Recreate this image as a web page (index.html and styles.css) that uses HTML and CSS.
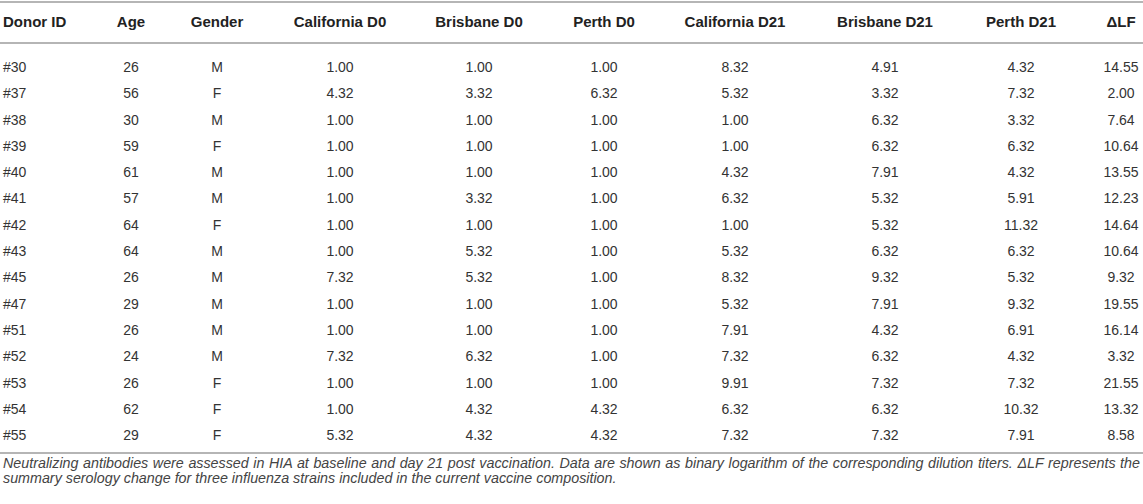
FILE: index.html
```html
<!DOCTYPE html>
<html lang="en">
<head>
    <meta charset="UTF-8">
    <title>Donor serology</title>
    <link rel="stylesheet" href="styles.css">
</head>
<body>
    <table class="titers">
        <colgroup>
            <col class="c-id"><col class="c-age"><col class="c-gender">
            <col class="c-cal0"><col class="c-bris0"><col class="c-perth0">
            <col class="c-cal21"><col class="c-bris21"><col class="c-perth21">
            <col class="c-dlf">
        </colgroup>
        <thead>
            <tr>
                <th class="left">Donor ID</th>
                <th>Age</th>
                <th>Gender</th>
                <th>California D0</th>
                <th>Brisbane D0</th>
                <th>Perth D0</th>
                <th>California D21</th>
                <th>Brisbane D21</th>
                <th>Perth D21</th>
                <th>&Delta;LF</th>
            </tr>
        </thead>
        <tbody>
            <tr><td class="left">#30</td><td>26</td><td>M</td><td>1.00</td><td>1.00</td><td>1.00</td><td>8.32</td><td>4.91</td><td>4.32</td><td>14.55</td></tr>
            <tr><td class="left">#37</td><td>56</td><td>F</td><td>4.32</td><td>3.32</td><td>6.32</td><td>5.32</td><td>3.32</td><td>7.32</td><td>2.00</td></tr>
            <tr><td class="left">#38</td><td>30</td><td>M</td><td>1.00</td><td>1.00</td><td>1.00</td><td>1.00</td><td>6.32</td><td>3.32</td><td>7.64</td></tr>
            <tr><td class="left">#39</td><td>59</td><td>F</td><td>1.00</td><td>1.00</td><td>1.00</td><td>1.00</td><td>6.32</td><td>6.32</td><td>10.64</td></tr>
            <tr><td class="left">#40</td><td>61</td><td>M</td><td>1.00</td><td>1.00</td><td>1.00</td><td>4.32</td><td>7.91</td><td>4.32</td><td>13.55</td></tr>
            <tr><td class="left">#41</td><td>57</td><td>M</td><td>1.00</td><td>3.32</td><td>1.00</td><td>6.32</td><td>5.32</td><td>5.91</td><td>12.23</td></tr>
            <tr><td class="left">#42</td><td>64</td><td>F</td><td>1.00</td><td>1.00</td><td>1.00</td><td>1.00</td><td>5.32</td><td>11.32</td><td>14.64</td></tr>
            <tr><td class="left">#43</td><td>64</td><td>M</td><td>1.00</td><td>5.32</td><td>1.00</td><td>5.32</td><td>6.32</td><td>6.32</td><td>10.64</td></tr>
            <tr><td class="left">#45</td><td>26</td><td>M</td><td>7.32</td><td>5.32</td><td>1.00</td><td>8.32</td><td>9.32</td><td>5.32</td><td>9.32</td></tr>
            <tr><td class="left">#47</td><td>29</td><td>M</td><td>1.00</td><td>1.00</td><td>1.00</td><td>5.32</td><td>7.91</td><td>9.32</td><td>19.55</td></tr>
            <tr><td class="left">#51</td><td>26</td><td>M</td><td>1.00</td><td>1.00</td><td>1.00</td><td>7.91</td><td>4.32</td><td>6.91</td><td>16.14</td></tr>
            <tr><td class="left">#52</td><td>24</td><td>M</td><td>7.32</td><td>6.32</td><td>1.00</td><td>7.32</td><td>6.32</td><td>4.32</td><td>3.32</td></tr>
            <tr><td class="left">#53</td><td>26</td><td>F</td><td>1.00</td><td>1.00</td><td>1.00</td><td>9.91</td><td>7.32</td><td>7.32</td><td>21.55</td></tr>
            <tr><td class="left">#54</td><td>62</td><td>F</td><td>1.00</td><td>4.32</td><td>4.32</td><td>6.32</td><td>6.32</td><td>10.32</td><td>13.32</td></tr>
            <tr><td class="left">#55</td><td>29</td><td>F</td><td>5.32</td><td>4.32</td><td>4.32</td><td>7.32</td><td>7.32</td><td>7.91</td><td>8.58</td></tr>
        </tbody>
    </table>
    <p class="note">Neutralizing antibodies were assessed in HIA at baseline and day 21 post vaccination. Data are shown as binary logarithm of the corresponding dilution titers. &Delta;LF represents the summary serology change for three influenza strains included in the current vaccine composition.</p>
</body>
</html>
```

FILE: styles.css
```css
body {
    margin: 0;
    font-family: "Liberation Sans", Arial, sans-serif;
    color: #333;
    background: #fff;
}
.titers {
    width: 1143px;
    margin-top: 1px;
    border-collapse: collapse;
    table-layout: fixed;
    border-top: 2px solid #b5b5b5;
    border-bottom: 2px solid #b5b5b5;
}
.c-id { width: 115px; }
.c-age { width: 32px; }
.c-gender { width: 140px; }
.c-cal0 { width: 106px; }
.c-bris0 { width: 172px; }
.c-perth0 { width: 78px; }
.c-cal21 { width: 184px; }
.c-bris21 { width: 116px; }
.c-perth21 { width: 156px; }
.c-dlf { width: 44px; }
.titers th {
    font-size: 15px;
    font-weight: bold;
    color: #222;
    line-height: 20px;
    padding: 9px 0 10px;
    text-align: center;
    white-space: nowrap;
    border-bottom: 2px solid #b5b5b5;
}
.titers td {
    font-size: 14px;
    line-height: 26.3px;
    padding: 0;
    text-align: center;
    white-space: nowrap;
}
.titers tbody tr:first-child td {
    padding-top: 10px;
}
.titers tbody tr:last-child td {
    padding-bottom: 4px;
}
.titers .left {
    text-align: left;
    padding-left: 3px;
}
.note {
    margin: 2px 3px 0 3px;
    font-size: 14.3px;
    font-style: italic;
    line-height: 15px;
    color: #444;
    text-align: justify;
}
```
